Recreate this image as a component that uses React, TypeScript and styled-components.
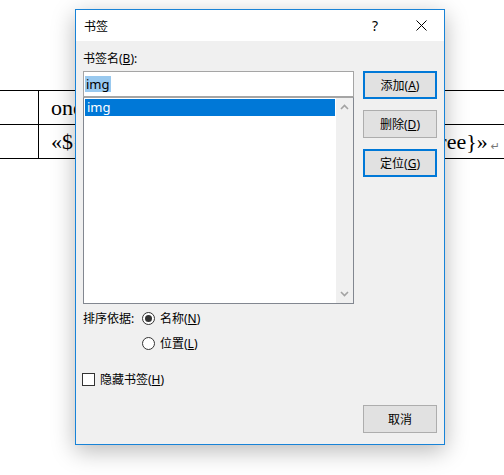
import React from "react";
import styled, { createGlobalStyle } from "styled-components";

const Global = createGlobalStyle`
  html, body { margin: 0; padding: 0; background: #fff; }
  body { width: 504px; height: 475px; overflow: hidden; }
`;

const UI_FONT = `"Noto Sans", "Noto Sans CJK SC", sans-serif`;

const Page = styled.div`
  position: relative;
  width: 504px;
  height: 475px;
  background: #fff;
  overflow: hidden;
`;

const DocTable = styled.div`
  margin-top: 90px;
  border-top: 1px solid #000;
  font-family: "Liberation Serif", serif;
  font-size: 22px;
  color: #000;
`;

const DocRow = styled.div`
  display: grid;
  grid-template-columns: 39px 1fr;
  grid-template-rows: 33px;
  height: 33px;
  overflow: hidden;
  border-bottom: 1px solid #000;
`;

const FirstCell = styled.div`
  border-right: 1px solid #000;
`;

const TextCell = styled.div`
  display: flex;
  align-items: center;
  justify-content: space-between;
  height: 33px;
  padding: 0 4px 0 12px;
  white-space: nowrap;
`;

const ParaMark = styled.span`
  font-family: "DejaVu Sans", sans-serif;
  font-size: 11px;
  color: #777;
  margin-left: 3px;
  position: relative;
  top: 1px;
`;

const Dialog = styled.div`
  position: absolute;
  left: 75px;
  top: 9px;
  width: 370px;
  height: 436px;
  box-sizing: border-box;
  border: 1px solid #1883d7;
  background: #f0f0f0;
  box-shadow: 0 6px 22px rgba(0, 0, 0, 0.28);
  display: flex;
  flex-direction: column;
  font-family: ${UI_FONT};
  font-size: 12px;
  color: #000;
`;

const TitleBar = styled.div`
  height: 31px;
  background: #fff;
  display: flex;
  align-items: center;
  padding-left: 8px;
`;

const Title = styled.div`
  flex: 1;
  font-size: 12px;
`;

const TitleButton = styled.div`
  width: 46px;
  height: 31px;
  display: flex;
  align-items: center;
  justify-content: center;
  font-size: 14px;
`;

const Body = styled.div`
  flex: 1;
  display: grid;
  grid-template-columns: 271px 74px;
  column-gap: 9px;
  padding: 10px 7px 11px 7px;
`;

const LeftCol = styled.div`
  display: flex;
  flex-direction: column;
`;

const Label = styled.div`
  height: 16px;
  line-height: 16px;
  margin-bottom: 4px;
`;

const NameInput = styled.div`
  height: 26px;
  box-sizing: border-box;
  border: 1px solid #a5a5a5;
  background: #fff;
  display: flex;
  align-items: center;
  padding-left: 1px;
`;

const Selected = styled.span`
  background: #99c9ef;
  line-height: 16px;
  font-size: 13px;
  padding: 0 1px 0 1px;
`;

const List = styled.div`
  height: 207px;
  box-sizing: border-box;
  border: 1px solid #828790;
  border-top-color: #a5a5a5;
  background: #fff;
  display: flex;
`;

const ListItems = styled.div`
  flex: 1;
  padding: 1px;
`;

const ListItem = styled.div<{ $active?: boolean }>`
  height: 17px;
  line-height: 17px;
  padding-left: 2px;
  font-size: 13px;
  background: ${(p) => (p.$active ? "#0078d7" : "transparent")};
  color: ${(p) => (p.$active ? "#fff" : "#000")};
`;

const ScrollBar = styled.div`
  width: 17px;
  background: #f0f0f0;
  display: flex;
  flex-direction: column;
  justify-content: space-between;
  align-items: center;
  padding: 6px 0;
`;

const SortRow = styled.div<{ $first?: boolean }>`
  display: flex;
  align-items: center;
  height: 20px;
  margin-top: ${(p) => (p.$first ? "4px" : "5px")};
`;

const SortLabel = styled.div`
  width: 59px;
`;

const Radio = styled.span<{ $checked?: boolean }>`
  width: 13px;
  height: 13px;
  box-sizing: border-box;
  border: 1px solid #333;
  border-radius: 50%;
  background: #fff;
  display: inline-flex;
  align-items: center;
  justify-content: center;
  margin-right: 5px;
  &::after {
    content: "";
    display: ${(p) => (p.$checked ? "block" : "none")};
    width: 7px;
    height: 7px;
    border-radius: 50%;
    background: #333;
  }
`;

const CheckRow = styled.div`
  display: flex;
  align-items: center;
  height: 20px;
  margin-top: 16px;
`;

const Checkbox = styled.span`
  width: 13px;
  height: 13px;
  box-sizing: border-box;
  border: 1px solid #333;
  background: #fff;
  margin-left: -1px;
  margin-right: 5px;
`;

const RightCol = styled.div`
  display: flex;
  flex-direction: column;
  gap: 11px;
  padding-top: 20px;
`;

const Button = styled.div<{ $primary?: boolean; $bottom?: boolean }>`
  height: 28px;
  box-sizing: border-box;
  background: #e1e1e1;
  border: ${(p) => (p.$primary ? "2px solid #0078d7" : "1px solid #adadad")};
  display: flex;
  align-items: center;
  justify-content: center;
  white-space: nowrap;
  margin-top: ${(p) => (p.$bottom ? "auto" : "0")};
`;

const Chevron = ({ up }: { up?: boolean }) => (
  <svg width="9" height="6" viewBox="0 0 9 6">
    <path
      d={up ? "M1 5 L4.5 1.5 L8 5" : "M1 1 L4.5 4.5 L8 1"}
      fill="none"
      stroke="#a3a3a3"
      strokeWidth="1.6"
    />
  </svg>
);

const CloseIcon = () => (
  <svg width="11" height="11" viewBox="0 0 11 11">
    <path d="M0.5 0.5 L10.5 10.5 M10.5 0.5 L0.5 10.5" stroke="#000" strokeWidth="1" />
  </svg>
);

const leftField = "«${img.one}";
const rightField = "«${img.three}»";

export default function App() {
  return (
    <Page>
      <Global />
      <DocTable>
        <DocRow>
          <FirstCell />
          <TextCell>
            <span>one</span>
          </TextCell>
        </DocRow>
        <DocRow>
          <FirstCell />
          <TextCell>
            <span>{leftField}</span>
            <span>
              {rightField}
              <ParaMark>↵</ParaMark>
            </span>
          </TextCell>
        </DocRow>
      </DocTable>

      <Dialog>
        <TitleBar>
          <Title>书签</Title>
          <TitleButton>?</TitleButton>
          <TitleButton>
            <CloseIcon />
          </TitleButton>
        </TitleBar>
        <Body>
          <LeftCol>
            <Label>
              书签名(<u>B</u>):
            </Label>
            <NameInput>
              <Selected>img</Selected>
            </NameInput>
            <List>
              <ListItems>
                <ListItem $active>img</ListItem>
              </ListItems>
              <ScrollBar>
                <Chevron up />
                <Chevron />
              </ScrollBar>
            </List>
            <SortRow $first>
              <SortLabel>排序依据:</SortLabel>
              <Radio $checked />
              <span>
                名称(<u>N</u>)
              </span>
            </SortRow>
            <SortRow>
              <SortLabel />
              <Radio />
              <span>
                位置(<u>L</u>)
              </span>
            </SortRow>
            <CheckRow>
              <Checkbox />
              <span>
                隐藏书签(<u>H</u>)
              </span>
            </CheckRow>
          </LeftCol>
          <RightCol>
            <Button $primary>
              添加(<u>A</u>)
            </Button>
            <Button>
              删除(<u>D</u>)
            </Button>
            <Button $primary>
              定位(<u>G</u>)
            </Button>
            <Button $bottom>取消</Button>
          </RightCol>
        </Body>
      </Dialog>
    </Page>
  );
}
